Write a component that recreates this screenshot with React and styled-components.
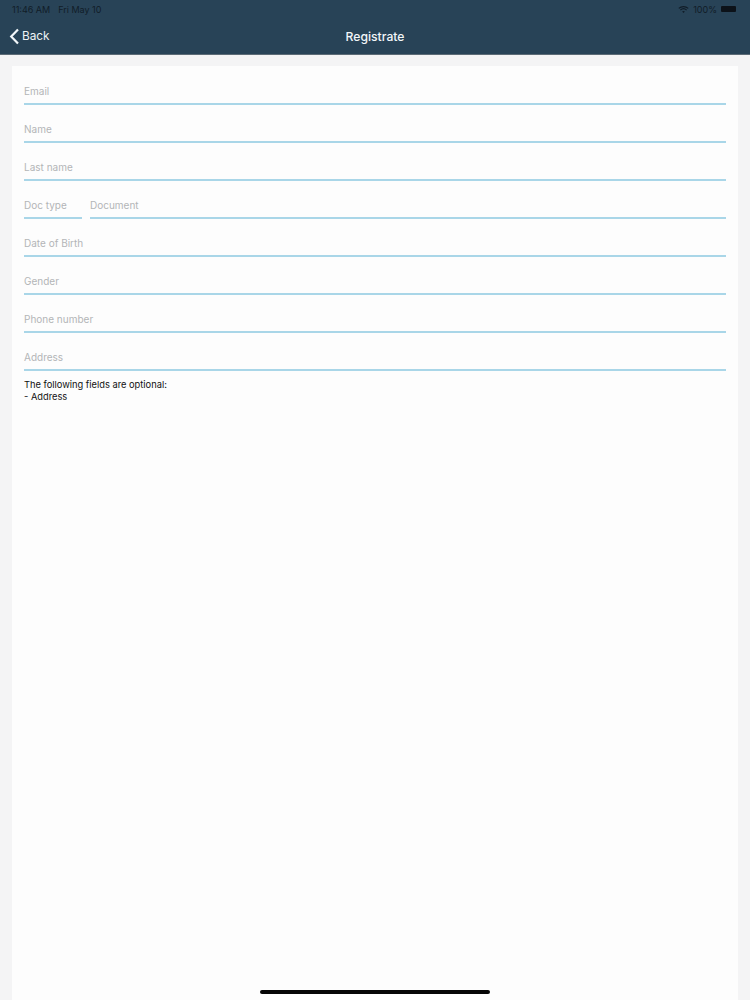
import styled, { createGlobalStyle } from "styled-components";

const GlobalStyle = createGlobalStyle`
  html, body {
    margin: 0;
    padding: 0;
    background: #f4f4f5;
    font-family: Inter, "Liberation Sans", sans-serif;
  }
`;

const fields = ["Email", "Name", "Last name"];
const fieldsAfter = ["Date of Birth", "Gender", "Phone number", "Address"];

const App = () => {
  return (
    <Page>
      <GlobalStyle />
      <Header>
        <StatusBar>
          <StatusTime>11:46 AM</StatusTime>
          <StatusTime>Fri May 10</StatusTime>
          <StatusRight>
            <svg width="11" height="9" viewBox="0 0 14 10">
              <path d="M1 3.6C4.4.4 9.6.4 13 3.6" fill="none" stroke="#111d28" strokeWidth="1.6" />
              <path d="M3 5.8c2.3-2.1 5.7-2.1 8 0" fill="none" stroke="#111d28" strokeWidth="1.6" />
              <path d="M5.2 7.7c1-.9 2.6-.9 3.6 0L7 9.6z" fill="#111d28" />
            </svg>
            <StatusTime>100%</StatusTime>
            <Battery />
          </StatusRight>
        </StatusBar>
        <NavBar>
          <BackLink>
            <svg width="11" height="17" viewBox="0 0 11 17">
              <path d="M9 1.5 2.2 8.5 9 15.5" fill="none" stroke="#f2f6f9" strokeWidth="2.2" />
            </svg>
            <span>Back</span>
          </BackLink>
          <Title>Registrate</Title>
        </NavBar>
      </Header>
      <Card>
        {fields.map((label) => (
          <Field key={label}>{label}</Field>
        ))}
        <FieldRow>
          <Field $width="58px">Doc type</Field>
          <Field $grow>Document</Field>
        </FieldRow>
        {fieldsAfter.map((label) => (
          <Field key={label}>{label}</Field>
        ))}
        <Note>
          The following fields are optional:
          <br />- Address
        </Note>
      </Card>
      <HomeBar />
    </Page>
  );
};

const Page = styled.div`
  position: relative;
  display: flex;
  flex-direction: column;
  width: 750px;
  height: 1000px;
  overflow: hidden;
  background: #f4f4f5;
`;

const Header = styled.header`
  flex: none;
  height: 55px;
  background: #284357;
  border-bottom: 1px solid #5c6b76;
  box-sizing: border-box;
`;

const StatusBar = styled.div`
  display: flex;
  align-items: center;
  gap: 8px;
  height: 18px;
  padding: 0 14px 0 12px;
`;

const StatusTime = styled.span`
  font-size: 9px;
  color: #111d28;
`;

const StatusRight = styled.div`
  display: flex;
  align-items: center;
  gap: 4px;
  margin-left: auto;
`;

const Battery = styled.div`
  width: 15px;
  height: 6px;
  background: #0c1219;
  border-radius: 1px;
`;

const NavBar = styled.div`
  display: grid;
  grid-template-columns: 1fr auto 1fr;
  align-items: center;
  height: 36px;
  padding: 0 9px;
`;

const BackLink = styled.div`
  display: flex;
  align-items: center;
  gap: 2px;
  font-size: 11.8px;
  color: #eef3f6;
`;

const Title = styled.div`
  font-size: 12.2px;
  font-weight: 500;
  color: #f2f6f9;
`;

const Card = styled.main`
  flex: 1;
  margin: 11px 12px 0;
  padding: 1px 12px 0;
  background: #fdfdfd;
`;

const Field = styled.div`
  box-sizing: border-box;
  flex: ${(p) => (p.$grow ? "1" : "none")};
  width: ${(p) => p.$width || "auto"};
  height: 38px;
  padding-top: 17.5px;
  font-size: 10px;
  line-height: 13px;
  color: #b3b5b7;
  border-bottom: 2px solid #a9d6e8;
`;

const FieldRow = styled.div`
  display: flex;
  gap: 8px;
`;

const Note = styled.p`
  margin: 8px 0 0;
  font-size: 9.3px;
  line-height: 12px;
  color: #111;
`;

const HomeBar = styled.div`
  position: absolute;
  left: 260px;
  bottom: 6px;
  width: 230px;
  height: 4px;
  background: #050505;
  border-radius: 2px;
`;

export default App;
